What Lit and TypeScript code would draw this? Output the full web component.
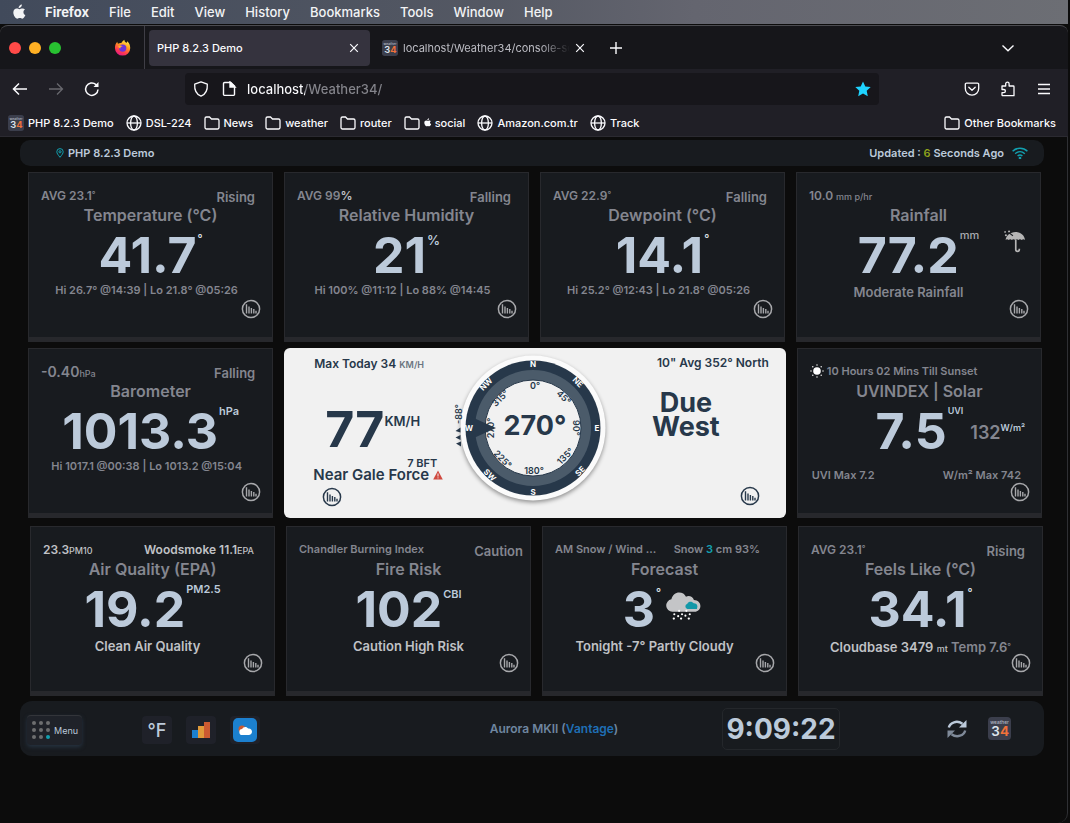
import { LitElement, html, svg, css, nothing, TemplateResult } from "lit";
import { customElement, property } from "lit/decorators.js";

const chartIcon = (label: string) => html`
  <button class="chart" aria-label=${label}>
    <svg viewBox="0 0 20 20" width="20" height="20" fill="none" stroke="currentColor">
      <circle cx="10" cy="10" r="8.6" stroke-width="1.5" />
      <path d="M5.5 5.2v9.3M8 7.5v7M10.4 9v5.5M12.8 10v4.5M15 11.8v2.7" stroke-width="1.4" />
    </svg>
  </button>`;

const appleIcon = (size: number) => html`
  <svg class="apple" viewBox="0 0 16 18" width=${size} height=${size} fill="currentColor">
    <path d="M11.2.6c.1 1.1-.4 2.100-1 2.800-.7.8-1.700 1.300-2.600 1.200-.1-1 .4-2.100 1-2.700.7-.7 1.800-1.300 2.600-1.300zM14.700 6.300c-1 .6-1.700 1.500-1.700 2.900 0 1.600.9 2.700 2.200 3.200-.5 1.500-1.900 4-3.500 4.100-1 0-1.500-.7-2.800-.7-1.300 0-1.800.6-2.800.7C4 16.500 1.600 12.700 1.600 9.600c0-3 1.900-4.600 3.900-4.600 1.200 0 2.200.8 3 .8.800 0 2.100-.9 3.500-.8 1 0 2 .5 2.700 1.300z" />
  </svg>`;

const logo34 = (size: number) => html`
  <svg viewBox="0 0 24 24" width=${size} height=${size}>
    <rect width="24" height="24" rx="4" fill="#3b3e4c" />
    <text x="12" y="7" text-anchor="middle" font-family="Inter, sans-serif" font-size="5" font-weight="500" fill="#b4b8c2">weather</text>
    <text x="3.500" y="20" font-family="Inter, sans-serif" font-size="14" font-weight="600" fill="#dfe6ee">3<tspan fill="#f0713a" font-weight="700">4</tspan></text>
  </svg>`;

const globe = html`
  <svg viewBox="0 0 16 16" width="16" height="16" fill="none" stroke="currentColor" stroke-width="1.3">
    <circle cx="8" cy="8" r="7" /><ellipse cx="8" cy="8" rx="3.400" ry="7" /><path d="M1 8h14" />
  </svg>`;

const folder = html`
  <svg viewBox="0 0 16 16" width="16" height="16" fill="none" stroke="currentColor" stroke-width="1.300">
    <path d="M1 3.500A1.500 1.500 0 0 1 2.500 2H5.500L7.500 4H13.500A1.500 1.500 0 0 1 15 5.500V12.500A1.500 1.500 0 0 1 13.500 14H2.500A1.500 1.500 0 0 1 1 12.500z" />
  </svg>`;

const closeIcon = html`
  <svg viewBox="0 0 10 10" width="10" height="10" fill="none" stroke="currentColor" stroke-width="1.200">
    <path d="M1.200 1.200l7.600 7.600M8.800 1.200L1.200 8.800" />
  </svg>`;

const firefoxIcon = html`
  <svg viewBox="0 0 18 18" width="17" height="17">
    <defs>
      <linearGradient id="fx" x1="0.800" y1="0" x2="0.300" y2="1">
        <stop offset="0" stop-color="#fff44f" /><stop offset="0.400" stop-color="#ff9a1f" />
        <stop offset="0.750" stop-color="#ff3750" /><stop offset="1" stop-color="#e0188a" />
      </linearGradient>
    </defs>
    <path d="M1 9.500C1 6.500 2 4.500 3.500 3c0 1 .3 1.600.8 2 1-.8 2.300-1 3.400-.8C8.500 3 9.500 2 11 .8c-.2 1.600 1 2.600 2.300 3.400.4-.5.600-1 .6-1.700C16 4 17.200 6.700 17.200 9.500a8.100 8.100 0 0 1-16.200 0z" fill="url(#fx)" />
    <circle cx="9.200" cy="9.600" r="3.900" fill="#6b34d8" />
    <path d="M4.500 7.500c1.500-1 3.500-.6 4.800.2-1.700.2-2.600 1-2.600 2.100 0 .9-1.900-.2-2.200-2.300z" fill="#ffb02e" />
  </svg>`;

const bookmarks: { icon: TemplateResult; name: string; apple?: boolean }[] = [
  { icon: logo34(16), name: "PHP 8.2.3 Demo" },
  { icon: globe, name: "DSL-224" },
  { icon: folder, name: "News" },
  { icon: folder, name: "weather" },
  { icon: folder, name: "router" },
  { icon: folder, name: "social", apple: true },
  { icon: globe, name: "Amazon.com.tr" },
  { icon: globe, name: "Track" },
];

@customElement("browser-chrome")
export class BrowserChrome extends LitElement {
  static styles = css`
    :host { display: block; color: #fbfbfe; }
    * { box-sizing: border-box; }
    svg { display: block; flex: none; }
    button { font: inherit; color: inherit; background: none; border: 0; padding: 0; cursor: pointer; }
    a { color: inherit; text-decoration: none; }
    .menubar { display: flex; align-items: center; height: 24px; padding: 0 0 1px 11px; background: linear-gradient(90deg, #414a5b, #545863 45%, #64656f 65%, #6c6e74); color: #f2f3f5; font-size: 13px; font-weight: 500; text-shadow: 0 1px 2px rgba(0, 0, 0, 0.300); }
    .menubar button { margin-left: 20px; }
    .menubar .app { font-weight: 700; margin-left: 18px; }
    .frame { background: #16161a; border-top: 1px solid #4b4b50; border-radius: 8px 8px 0 0; margin-top: 1px; }
    .tabs { display: flex; align-items: center; height: 43px; font-size: 11px; font-weight: 500; }
    .lights { display: flex; gap: 8px; padding-left: 9px; width: 114px; }
    .light { width: 12px; height: 12px; border-radius: 50%; }
    .red { background: #ff4a48; }
    .amber { background: #ffb024; }
    .green { background: #28c131; }
    .divider { align-self: stretch; width: 1px; margin-left: 13px; background: #3f3e46; }
    .tab { display: flex; align-items: center; justify-content: space-between; width: 221px; height: 36px; margin-left: 4px; padding: 0 11px 0 8px; border-radius: 4px; background: #35333e; }
    .second { justify-content: flex-start; background: none; width: 222px; gap: 5px; margin-left: 4px; color: #bdbdc4; font-weight: 400; }
    .clip { width: 171px; overflow: hidden; white-space: nowrap; -webkit-mask-image: linear-gradient(90deg, #000 82%, transparent); mask-image: linear-gradient(90deg, #000 82%, transparent); }
    .second .close { color: #fbfbfe; }
    .add { margin-left: 14px; }
    .list { margin-left: auto; margin-right: 54px; }
    .toolbar { display: flex; align-items: center; height: 40px; padding: 0 16px 0 12px; background: #201f26; }
    .nav { display: flex; gap: 20px; width: 173px; }
    .dim { color: #68686e; }
    .url { display: flex; align-items: center; gap: 12px; flex: 1; height: 32px; padding: 0 8px 0 8px; border-radius: 4px; background: #17161b; }
    .url input { flex: 1; min-width: 0; height: 24px; padding: 0; margin-left: -2px; border: 0; outline: 0; font: 500 13px/24px Inter, sans-serif; color: transparent; background: linear-gradient(90deg, #fbfbfe 58px, #85858c 58px); -webkit-background-clip: text; background-clip: text; }
    .tools { display: flex; gap: 20px; margin-left: 85px; }
    .marks { display: flex; align-items: center; gap: 12px; height: 28px; padding: 0 12px 0 8px; background: #201f26; font-size: 11px; font-weight: 500; border-bottom: 1px solid #2b2a31; }
    .mark { display: flex; align-items: center; gap: 4px; white-space: nowrap; }
    .mark .apple { margin: 0 -1px 0 -1px; }
    .other { margin-left: auto; }
  `;
  render() {
    return html`
      <nav class="menubar" aria-label="Menu bar">
        ${appleIcon(16)}
        <button class="app">Firefox</button>
        ${["File", "Edit", "View", "History", "Bookmarks", "Tools", "Window", "Help"].map((m) => html`<button>${m}</button>`)}
      </nav>
      <div class="frame">
        <div class="tabs">
          <div class="lights"><span class="light red"></span><span class="light amber"></span><span class="light green"></span></div>
          ${firefoxIcon}
          <span class="divider"></span>
          <div class="tab"><span>PHP 8.2.3 Demo</span><button class="close" aria-label="Close tab">${closeIcon}</button></div>
          <div class="tab second">${logo34(16)}<span class="clip">localhost/Weather34/console-se</span><button class="close" aria-label="Close tab">${closeIcon}</button></div>
          <button class="add" aria-label="New tab"><svg viewBox="0 0 12 12" width="12" height="12" stroke="currentColor" stroke-width="1.400"><path d="M6 0v12M0 6h12" /></svg></button>
          <button class="list" aria-label="List all tabs"><svg viewBox="0 0 12 12" width="12" height="12" fill="none" stroke="currentColor" stroke-width="1.400"><path d="M.5 3.500L6 8.800l5.500-5.300" /></svg></button>
        </div>
        <div class="toolbar">
          <div class="nav">
            <button aria-label="Back"><svg viewBox="0 0 16 16" width="16" height="16" fill="none" stroke="currentColor" stroke-width="1.500"><path d="M15 8H1.500M7 2.500L1.500 8 7 13.500" /></svg></button>
            <button class="dim" aria-label="Forward"><svg viewBox="0 0 16 16" width="16" height="16" fill="none" stroke="currentColor" stroke-width="1.300"><path d="M1 8h13.500M9 2.500L14.500 8 9 13.500" /></svg></button>
            <button aria-label="Reload"><svg viewBox="0 0 16 16" width="16" height="16" fill="none" stroke="currentColor" stroke-width="1.500"><path d="M14 8.500A6.200 6.200 0 1 1 12 3.600l1.500 1.400" /><path d="M14.500 1v5h-5z" fill="currentColor" stroke="none" /></svg></button>
          </div>
          <div class="url">
            <svg viewBox="0 0 16 16" width="16" height="16" fill="none" stroke="currentColor" stroke-width="1.300"><path d="M8 .8l6.300 2.400c.4 5.800-1.600 10-6.300 12C3.300 13.200 1.300 9 1.700 3.200z" stroke-linejoin="round" /></svg>
            <svg viewBox="0 0 16 16" width="16" height="16" fill="none" stroke="currentColor" stroke-width="1.400"><path d="M3.700 1.500h6L13.500 5v8.200a1.200 1.200 0 0 1-1.200 1.200H3.700a1.200 1.200 0 0 1-1.200-1.200V2.700a1.200 1.200 0 0 1 1.200-1.200z" /><path d="M9 1v5h5z" fill="currentColor" /></svg>
            <input aria-label="Address" .value=${"localhost/Weather34/"} />
            <svg viewBox="0 0 16 16" width="16" height="16" fill="#1fd3ff"><path d="M8 .4l2.300 5 5.400.6-4 3.700 1.100 5.500L8 12.500l-4.800 2.700 1.100-5.500-4-3.700 5.400-.6z" /></svg>
          </div>
          <div class="tools">
            <button aria-label="Save to Pocket"><svg viewBox="0 0 16 16" width="16" height="16" fill="none" stroke="currentColor" stroke-width="1.300" stroke-linejoin="round"><path d="M2.500 2.200h11A1.200 1.200 0 0 1 14.700 3.400V7.500a6.700 6.700 0 0 1-13.400 0V3.400A1.200 1.200 0 0 1 2.500 2.200z" /><path d="M4.800 6.300L8 9.300l3.200-3" stroke-linecap="round" /></svg></button>
            <button aria-label="Extensions"><svg viewBox="0 0 16 16" width="16" height="16" fill="none" stroke="currentColor" stroke-width="1.300" stroke-linejoin="round"><path d="M2 5h3.700V2.800a1.700 1.700 0 0 1 3.400 0V5H13.300a.7.700 0 0 1 .7.700v9H2.700a.7.700 0 0 1-.7-.7v-2.300h1.800a1.600 1.600 0 0 0 0-3.200H2z" /></svg></button>
            <button aria-label="Application menu"><svg viewBox="0 0 16 16" width="16" height="16" stroke="currentColor" stroke-width="1.300"><path d="M2 3.500h12M2 8h12M2 12.500h12" /></svg></button>
          </div>
        </div>
        <nav class="marks" aria-label="Bookmarks">
          ${bookmarks.map((b) => html`<a class="mark" href="#">${b.icon}${b.apple ? appleIcon(9) : nothing}<span>${b.name}</span></a>`)}
          <a class="mark other" href="#">${folder}<span>Other Bookmarks</span></a>
        </nav>
      </div>
    `;
  }
}

@customElement("weather-card")
export class WeatherCard extends LitElement {
  @property() heading = "";
  @property() value = "";
  static styles = css`
    :host { display: flex; flex-direction: column; min-width: 0; height: 170px; box-sizing: border-box; background: #181b1f; border: 1px solid #28292d; border-bottom: 5px solid #27282c; color: #84868f; font-weight: 600; font-size: 11px; }
    .head { display: flex; justify-content: space-between; align-items: center; height: 20px; margin-top: 12px; padding: 0 17px 0 12px; white-space: nowrap; }
    h2 { margin: 0; font-size: 16px; line-height: 20px; font-weight: 600; text-align: center; }
    .main { display: grid; grid-template-columns: 1fr auto 1fr; height: 60px; }
    .reading { display: flex; grid-column: 2; }
    .value { font-size: 50px; line-height: 60px; font-weight: 700; color: #bccada; }
    .sub { text-align: center; line-height: 14px; height: 14px; white-space: nowrap; }
    .foot { display: flex; justify-content: flex-end; padding: 0 11px; }
    ::slotted([slot="aside"]) { grid-column: 3; }
  `;
  render() {
    return html`
      <div class="head"><slot name="left"></slot><slot name="right"></slot></div>
      <h2>${this.heading}</h2>
      <div class="main">
        <div class="reading"><span class="value">${this.value}</span><slot name="unit"></slot></div>
        <slot name="aside"></slot>
      </div>
      <div class="sub"><slot name="sub"></slot></div>
      <div class="foot"><slot name="foot"></slot></div>
    `;
  }
}

const dialPoints = [
  { t: "N", x: 83, y: 16, r: 0 }, { t: "NE", x: 128, y: 34, r: 45 }, { t: "E", x: 147, y: 80, r: 0 }, { t: "SE", x: 130, y: 123, r: -45 },
  { t: "S", x: 83, y: 144, r: 0 }, { t: "SW", x: 40, y: 127, r: 45 }, { t: "W", x: 19, y: 80, r: 0 }, { t: "NW", x: 36, y: 36, r: -45 },
];
const dialDegrees = [
  { t: "0°", x: 85, y: 37, r: 0 }, { t: "45°", x: 114, y: 49, r: 45 }, { t: "90°", x: 126, y: 80, r: 90 }, { t: "135°", x: 115, y: 108, r: -45 },
  { t: "180°", x: 84, y: 122, r: 0 }, { t: "225°", x: 53, y: 111, r: 45 }, { t: "270°", x: 40, y: 80, r: -90 }, { t: "315°", x: 50, y: 50, r: -45 },
];

@customElement("wind-card")
export class WindCard extends LitElement {
  static styles = css`
    :host { display: grid; grid-template-columns: 1fr 170px 1fr; height: 170px; min-width: 0; border-radius: 6px; background: #f1f1f1; color: #27384a; font-weight: 600; font-size: 12px; }
    svg { display: block; }
    button { border: 0; padding: 0; background: none; color: inherit; }
    .left { padding: 8px 0 0 29px; white-space: nowrap; }
    .max { line-height: 16px; padding-left: 1px; }
    .max small { font-size: 9px; color: #6a7580; }
    .speed { display: flex; height: 56px; margin: 28px 0 0 12px; font-size: 50px; line-height: 56px; font-weight: 700; }
    .speed small { font-size: 13px; line-height: 40px; font-weight: 600; }
    .bft { font-size: 11px; line-height: 12px; padding-left: 94px; }
    .force { display: flex; align-items: center; gap: 4px; font-size: 15px; line-height: 12px; }
    .left .chart { margin: 6px 0 0 9px; }
    .right { display: flex; flex-direction: column; padding: 8px 17px 0 0; }
    .avg { text-align: right; line-height: 14px; white-space: nowrap; }
    .dir { margin: 21px 17px 0 0; font-size: 27px; line-height: 24px; font-weight: 700; text-align: center; }
    .right .chart { align-self: flex-end; margin: 47px 9px 0 0; }
    .t { font-family: Inter, sans-serif; font-size: 9px; font-weight: 600; fill: #27384a; text-anchor: middle; dominant-baseline: central; }
    .w { fill: #fff; font-size: 8px; font-weight: 700; }
    .big { font-size: 27px; font-weight: 700; }
    .dial { filter: drop-shadow(0 2px 2px rgba(0, 0, 0, 0.400)); }
  `;
  render() {
    return html`
      <div class="left">
        <div class="max">Max Today 34 <small>KM/H</small></div>
        <div class="speed">77<small>KM/H</small></div>
        <div class="bft">7 BFT</div>
        <div class="force">Near Gale Force <svg viewBox="0 0 10 10" width="10" height="10"><path d="M5 .5L9.800 9.500H.2z" fill="#d0493f" /><path d="M5 3.500v3M5 7.400v1" stroke="#f1f1f1" /></svg></div>
        ${chartIcon("Wind speed chart")}
      </div>
      <svg viewBox="0 0 170 170" width="170" height="170">
        <circle class="dial" cx="83" cy="80" r="72.500" fill="#fbfbfb" />
        <circle cx="83" cy="80" r="67.500" fill="#27384a" />
        <circle cx="83" cy="80" r="58" fill="#4b5b6a" />
        <circle cx="83" cy="80" r="48" fill="#f1f1f1" stroke="#27384a" />
        ${dialDegrees.map((d) => svg`<text class="t" x=${d.x} y=${d.y} transform="rotate(${d.r} ${d.x} ${d.y})">${d.t}</text>`)}
        <path d="M21 68L26 71 46 80 26 89 21 92z" fill="#27384a" />
        ${dialPoints.map((d) => svg`<text class="t w" x=${d.x} y=${d.y} transform="rotate(${d.r} ${d.x} ${d.y})">${d.t}</text>`)}
        <text class="t big" x="85" y="77">270°</text>
        <text class="t" x="8" y="66" transform="rotate(-90 8 66)">-88°</text>
        <path d="M5.500 83l5-3.500v5zM5.500 89.500l5-2.500v5zM6 95.500l5-2v5z" fill="#27384a" />
      </svg>
      <div class="right">
        <div class="avg">10" Avg 352° North</div>
        <div class="dir">Due<br />West</div>
        ${chartIcon("Wind direction chart")}
      </div>
    `;
  }
}

@customElement("app-root")
export class AppRoot extends LitElement {
  static styles = css`
    :host { display: flex; flex-direction: column; min-height: 100vh; box-sizing: border-box; padding-right: 2px; background: #0c0c0c; font-family: Inter, "Liberation Sans", sans-serif; }
    * { box-sizing: border-box; }
    svg { display: block; flex: none; }
    button { font: inherit; color: inherit; background: none; border: 0; padding: 0; cursor: pointer; }
    .page { flex: 1; padding: 3px 23px 0 20px; border-right: 1px solid #2f3034; border-radius: 0 0 10px 0; }
    .top { display: flex; align-items: center; height: 26px; padding: 0 16px 0 36px; border-radius: 10px; background: #181b1f; color: #bccada; font-size: 11px; font-weight: 600; }
    .top .place { display: flex; align-items: center; gap: 4px; }
    .top .updated { margin-left: auto; margin-right: 8px; }
    .fresh { color: #8fa31b; }
    .teal { color: #12a0b0; }
    .row { display: grid; grid-template-columns: repeat(4, minmax(0, 1fr)); gap: 11px; }
    .first { padding: 0 3px 0 8px; margin-top: 6px; }
    .second { padding: 0 2px 0 8px; margin-top: 6px; }
    .third { padding: 0 1px 0 10px; margin-top: 8px; }
    wind-card { grid-column: span 2; }
    .trend { font-size: 13px; padding-top: 4px; }
    .wide { margin-right: -10px; }
    .snow { margin-right: 9px; }
    .smoke { margin-right: 3px; }
    .sun { display: flex; align-items: center; gap: 3px; }
    .small { font-size: 9px; font-weight: 500; }
    .mid { font-size: 12px; }
    .strong { font-size: 14px; }
    .light { color: #c0c2c6; }
    .range { display: block; font-size: 11px; line-height: 10px; padding-right: 8px; }
    .sup { font-size: 8px; vertical-align: 3px; }
    .unit { font-size: 11px; line-height: 20px; color: #bccada; margin-left: 1px; }
    .grey { color: #a9abb0; font-weight: 500; }
    .low { line-height: 30px; }
    .percent { font-size: 13px; }
    .deg { margin-left: 1px; color: #dfe3e8; line-height: 26px; }
    .uvi { font-size: 9px; }
    .solar { display: flex; align-self: start; padding: 20px 0 0 7px; font-size: 18px; line-height: 24px; }
    .solar small { font-size: 9px; line-height: 14px; color: #bccada; }
    .umbrella { justify-self: end; padding: 5px 15px 0 0; color: #b5b5b5; }
    .cloud { padding: 13px 5px 0 4px; }
    .line { font-size: 13px; }
    .lead { padding-right: 20px; }
    .nudge { padding-right: 10px; }
    .chart { color: #a7a8ab; height: 20px; }
    .drop { margin-top: 7px; }
    .max { display: flex; justify-content: space-between; padding: 7px 20px 0 14px; }
    .bottom { display: flex; align-items: center; height: 55px; margin-top: 5px; border-radius: 12px; padding: 0 33px 0 7px; background: #181b1f; color: #bccada; }
    .menu { display: flex; align-items: center; gap: 4px; width: 55px; height: 30px; padding: 0 5px; border-radius: 4px; background: #1f2229; border-top: 1px solid #33353a; box-shadow: 0 2px 4px #263342; font-size: 9px; margin: 3px 60px 0 0; }
    .tile { display: grid; place-items: center; width: 30px; height: 28px; border-radius: 4px; background: #1f2129; margin-top: 3px; margin-right: 14px; font-size: 18px; font-weight: 500; }
    .station { flex: 1; padding-left: 112px; text-align: center; color: #6f86a0; font-size: 12px; font-weight: 600; white-space: nowrap; }
    .station a { color: #1f6fb5; text-decoration: none; }
    .clock { border: 1px solid #24272b; border-radius: 5px; height: 42px; width: 118px; line-height: 40px; text-align: center; font-size: 28px; font-weight: 700; margin-right: 107px; }
    .end { display: flex; align-items: center; gap: 21px; }
  `;

  private hiLo(hi: string, hiAt: string, lo: string, loAt: string) {
    return html`<span slot="sub" class="range">Hi ${hi} @${hiAt} | Lo ${lo} @${loAt}</span>`;
  }

  render() {
    const deg = html`<span slot="unit" class="unit deg">°</span>`;
    const foot = (label: string, drop = false) => html`<div slot="foot" class=${drop ? "drop" : ""}>${chartIcon(label)}</div>`;
    return html`
      <browser-chrome></browser-chrome>
      <main class="page">
        <header class="top">
          <span class="place">
            <svg viewBox="0 0 8 10" width="8" height="10" fill="none" stroke="#12a0b0"><path d="M4 9.300C2 6.800.8 5.200.8 3.800a3.200 3.200 0 0 1 6.400 0C7.200 5.200 6 6.800 4 9.300z" /><circle cx="4" cy="3.800" r="1.100" /></svg>
            PHP 8.2.3 Demo
          </span>
          <span class="updated">Updated : <span class="fresh">6</span> Seconds Ago</span>
          <svg viewBox="0 0 16 12" width="16" height="12" fill="none" stroke="#12a0b0" stroke-width="1.500"><path d="M.6 4.200c4.200-4 10.600-4 14.800 0M3.200 6.700c2.800-2.500 6.800-2.500 9.600 0M5.600 9c1.400-1.200 3.400-1.200 4.800 0" /><circle cx="8" cy="11" r=".6" fill="#12a0b0" /></svg>
        </header>

        <section class="row first">
          <weather-card heading="Temperature (°C)" value="41.7">
            <span slot="left" class="mid">AVG 23.1<span class="sup">°</span></span><span slot="right" class="trend">Rising</span>
            ${deg}${this.hiLo("26.7°", "14:39", "21.8°", "05:26")}${foot("Temperature chart")}
          </weather-card>
          <weather-card heading="Relative Humidity" value="21">
            <span slot="left" class="mid">AVG 99<span class="light">%</span></span><span slot="right" class="trend">Falling</span>
            <span slot="unit" class="unit low percent">%</span>${this.hiLo("100%", "11:12", "88%", "14:45")}${foot("Humidity chart")}
          </weather-card>
          <weather-card heading="Dewpoint (°C)" value="14.1">
            <span slot="left" class="mid">AVG 22.9<span class="sup">°</span></span><span slot="right" class="trend">Falling</span>
            ${deg}${this.hiLo("25.2°", "12:43", "21.8°", "05:26")}${foot("Dewpoint chart")}
          </weather-card>
          <weather-card heading="Rainfall" value="77.2">
            <span slot="left" class="mid">10.0 <span class="small">mm p/hr</span></span>
            <span slot="unit" class="unit grey">mm</span>
            <div slot="aside" class="umbrella">
              <svg viewBox="0 0 20 22" width="21" height="23" fill="currentColor">
                <path d="M1.500 9.500C2 5.500 6 2 11 2s8.700 3.500 9 7.500c-.9-.9-2.200-.9-3.100.1-.9-1-2.400-1-3.200 0-.8-1-2.300-1-3.100 0-.9-1-2.300-1-3.100 0-1-1-2.200-1-3 0-.9-.9-2.100-1-3-.1z" />
                <path d="M11.200 9v9.700a1.700 1.700 0 0 0 3.400 0V18" fill="none" stroke="currentColor" stroke-width="1.600" />
                <circle cx="1" cy="1.800" r=".8" /><circle cx="1.800" cy="5" r="1" /><circle cx="4.800" cy="1.500" r="1" />
                <path d="M4.500 2.500l4 3" stroke="#181b1f" />
              </svg>
            </div>
            <span slot="sub" class="line lead">Moderate Rainfall</span>${foot("Rainfall chart")}
          </weather-card>
        </section>

        <section class="row second">
          <weather-card heading="Barometer" value="1013.3">
            <span slot="left" class="strong">-0.40<span class="small">hPa</span></span><span slot="right" class="trend">Falling</span>
            <span slot="unit" class="unit">hPa</span>${this.hiLo("1017.1", "00:38", "1013.2", "15:04")}${foot("Barometer chart", true)}
          </weather-card>
          <wind-card></wind-card>
          <weather-card heading="UVINDEX | Solar" value="7.5">
            <span slot="left" class="sun"><svg viewBox="0 0 14 14" width="14" height="14" fill="#fff"><circle cx="7" cy="7" r="3.800" /><circle cx="7" cy="1" r=".7" /><circle cx="7" cy="13" r=".7" /><circle cx="1" cy="7" r=".7" /><circle cx="13" cy="7" r=".7" /><circle cx="2.800" cy="2.800" r=".7" /><circle cx="11.200" cy="2.800" r=".7" /><circle cx="2.800" cy="11.200" r=".7" /><circle cx="11.200" cy="11.200" r=".7" /></svg>10 Hours 02 Mins Till Sunset</span>
            <span slot="unit" class="unit uvi">UVI</span>
            <div slot="aside" class="solar">132<small>W/m²</small></div>
            <div slot="sub" class="max"><span>UVI Max 7.2</span><span>W/m² Max 742</span></div>${foot("Solar chart", true)}
          </weather-card>
        </section>

        <section class="row third">
          <weather-card heading="Air Quality (EPA)" value="19.2">
            <span slot="left" class="mid light">23.3<span class="small">PM10</span></span><span slot="right" class="mid light smoke">Woodsmoke 11.1<span class="small">EPA</span></span>
            <span slot="unit" class="unit">PM2.5</span><span slot="sub" class="line light nudge">Clean Air Quality</span>${foot("Air quality chart")}
          </weather-card>
          <weather-card heading="Fire Risk" value="102">
            <span slot="left">Chandler Burning Index</span><span slot="right" class="trend wide">Caution</span>
            <span slot="unit" class="unit low">CBI</span><span slot="sub" class="line light">Caution High Risk</span>${foot("Fire risk chart")}
          </weather-card>
          <weather-card heading="Forecast" value="3">
            <span slot="left">AM Snow / Wind ...</span><span slot="right" class="snow">Snow <span class="teal">3</span> cm 93%</span>
            ${deg}
            <div slot="unit" class="cloud">
              <svg viewBox="0 0 36 30" width="36" height="29">
                <path d="M7 20.500a6.500 6.500 0 0 1-1-12.900C7 3 10.300.5 14 .5c3.200 0 5.800 1.600 7.100 4.300 3.500-1.500 7 .2 8.200 3.600 4 .2 6.700 2.700 6.700 6.100 0 3.300-2.500 6-6 6z" fill="#c4c5c7" />
                <path d="M22.500 17.500a2.800 2.800 0 0 1 0-5.400c1.300-2.600 5-2.600 6.600-.4 2.300 0 3.800 1.300 3.800 3.300l-.5 2.500z" fill="#1398a8" />
                <g fill="#fff"><circle cx="9" cy="23" r="1.100" /><circle cx="14" cy="19.500" r="1.100" /><circle cx="17" cy="23" r="1.100" /><circle cx="21.500" cy="19.500" r="1.100" /><circle cx="25" cy="23" r="1.100" /><circle cx="13" cy="25" r="1.100" /><circle cx="20.500" cy="24.500" r="1.100" /><circle cx="8.500" cy="27.500" r="1.200" /><circle cx="16" cy="27.500" r="1.200" /><circle cx="24" cy="27.500" r="1.200" /></g>
              </svg>
            </div>
            <span slot="sub" class="line light lead">Tonight -7° Partly Cloudy</span>${foot("Forecast chart")}
          </weather-card>
          <weather-card heading="Feels Like (°C)" value="34.1">
            <span slot="left" class="mid">AVG 23.1<span class="sup">°</span></span><span slot="right" class="trend">Rising</span>
            ${deg}<span slot="sub" class="line"><span class="light">Cloudbase 3479 <span class="small">mt</span></span> Temp 7.6<span class="sup">°</span></span>${foot("Feels like chart")}
          </weather-card>
        </section>

        <footer class="bottom">
          <button class="menu">
            <svg viewBox="0 0 18 19" width="18" height="19">${[2, 9, 16].map((y) => [2, 9, 16].map((x) => svg`<circle cx=${x} cy=${y} r="2" fill=${x + y === 32 ? "#12a0b0" : "#6d6e70"} />`))}</svg>
            Menu
          </button>
          <button class="tile">°F</button>
          <button class="tile" aria-label="Charts"><svg viewBox="0 0 18 18" width="18" height="18"><path d="M0 9h6v8H0z" fill="#1c80cf" /><path d="M6 5h6v12H6z" fill="#e09a3a" /><path d="M12 1h6v16h-6z" fill="#cc5a31" /></svg></button>
          <button class="tile" aria-label="Forecast"><svg viewBox="0 0 24 24" width="24" height="24"><rect width="24" height="24" rx="5" fill="#1c80cf" /><circle cx="9" cy="11" r="3.500" fill="#cc5a31" /><path d="M9.500 17a3 3 0 0 1-.3-6c.6-2.300 4.600-3 6-.4 2.300-.3 3.800 1.300 3.800 3.200S17.500 17 15.800 17z" fill="#fff" /></svg></button>
          <span class="station">Aurora MKII (<a href="#">Vantage</a>)</span>
          <time class="clock">9:09:22</time>
          <div class="end">
            <button aria-label="Refresh"><svg viewBox="0 0 20 20" width="20" height="20" fill="none" stroke-width="2.400"><path d="M1.800 8.500C3 3.500 10 .8 15.500 4.800" stroke="#bccada" /><path d="M19.500 1v7.500H12z" fill="#bccada" /><path d="M18.200 11.500C17 16.500 10 19.200 4.500 15.200" stroke="#7f8a99" /><path d="M.5 19v-7.500H8z" fill="#7f8a99" /></svg></button>
            <button aria-label="weather34">${logo34(23)}</button>
          </div>
        </footer>
      </main>
    `;
  }
}
